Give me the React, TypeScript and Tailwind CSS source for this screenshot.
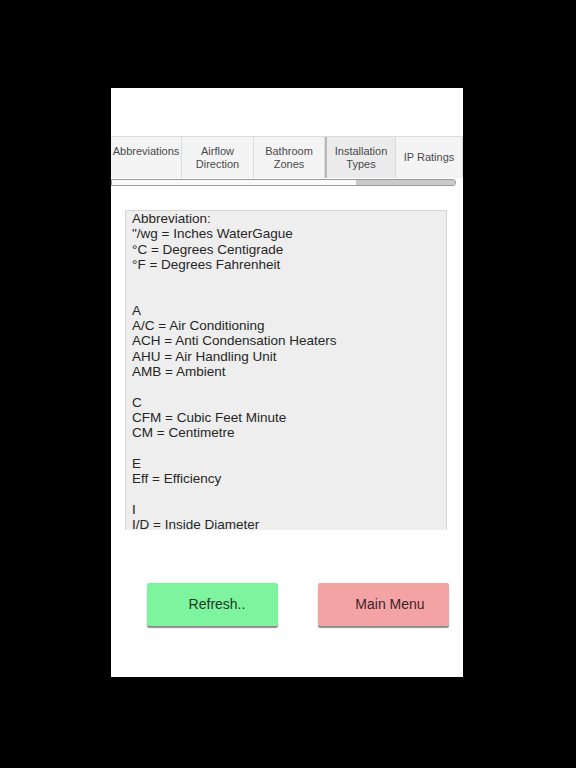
const tabs = [
  { label: ["Abbreviations"], w: "w-[71px]", active: false, top: true },
  { label: ["Airflow", "Direction"], w: "w-[72px]", active: false, top: false },
  { label: ["Bathroom", "Zones"], w: "w-[71px]", active: false, top: false },
  { label: ["Installation", "Types"], w: "w-[71px]", active: true, top: false },
  { label: ["IP Ratings"], w: "w-[67px]", active: false, top: false },
];

const lines = [
  "Abbreviation:",
  "\"/wg = Inches WaterGague",
  "°C = Degrees Centigrade",
  "°F = Degrees Fahrenheit",
  "",
  "",
  "A",
  "A/C = Air Conditioning",
  "ACH = Anti Condensation Heaters",
  "AHU = Air Handling Unit",
  "AMB = Ambient",
  "",
  "C",
  "CFM = Cubic Feet Minute",
  "CM = Centimetre",
  "",
  "E",
  "Eff = Efficiency",
  "",
  "I",
  "I/D = Inside Diameter",
];

export default function App() {
  return (
    <div className="w-[576px] h-[768px] bg-black pt-[88px] pl-[111px] font-['Liberation_Sans',Arial,sans-serif]">
      <div className="w-[352px] h-[589px] bg-white flex flex-col">
        {/* Tab strip */}
        <div className="mt-[48px] flex h-[42px] border-t border-[#dcdcdc] bg-[#f4f4f4]">
          {tabs.map((t, i) => (
            <div
              key={i}
              className={`${t.w} flex flex-col items-center ${t.top ? "justify-start pt-[8px]" : "justify-center"} text-[11px] leading-[12.5px] text-[#4a4a4a] border-r border-[#dcdcdc] ${
                t.active ? "bg-[#ebebeb] border-l-2 border-l-[#b8b8b8]" : ""
              }`}
            >
              {t.label.map((l) => (
                <span key={l}>{l}</span>
              ))}
            </div>
          ))}
        </div>

        {/* scrollbar */}
        <div className="mt-px w-[345px] h-[7px] border border-[#9a9a9a] rounded-r-[3px] bg-[#fafafa] flex justify-end overflow-hidden">
          <div className="w-[99px] h-full bg-[#c9c9c9]" />
        </div>

        {/* Text area */}
        <div className="mt-[24px] ml-[14px] w-[322px] h-[320px] bg-[#eeeeee] border border-[#d6d6d6] border-b-0 overflow-hidden pl-[6px] text-[13.5px] leading-[15.3px] text-[#262626]">
          {lines.map((l, i) => (
            <div key={i} className="h-[15.3px] whitespace-pre">
              {l}
            </div>
          ))}
        </div>

        {/* Buttons */}
        <div className="mt-[53px] ml-[36px] flex gap-[40px]">
          <button className="w-[131px] h-[43px] pl-[9px] bg-[#7ef49e] rounded-[2px] shadow-[0_2px_1px_rgba(0,0,0,0.45)] text-[14px] text-[#1f3a26]">
            Refresh..
          </button>
          <button className="w-[131px] h-[43px] pl-[13px] bg-[#f4a3a5] rounded-[2px] shadow-[0_2px_1px_rgba(0,0,0,0.45)] text-[14px] text-[#3f2428]">
            Main Menu
          </button>
        </div>
      </div>
    </div>
  );
}
